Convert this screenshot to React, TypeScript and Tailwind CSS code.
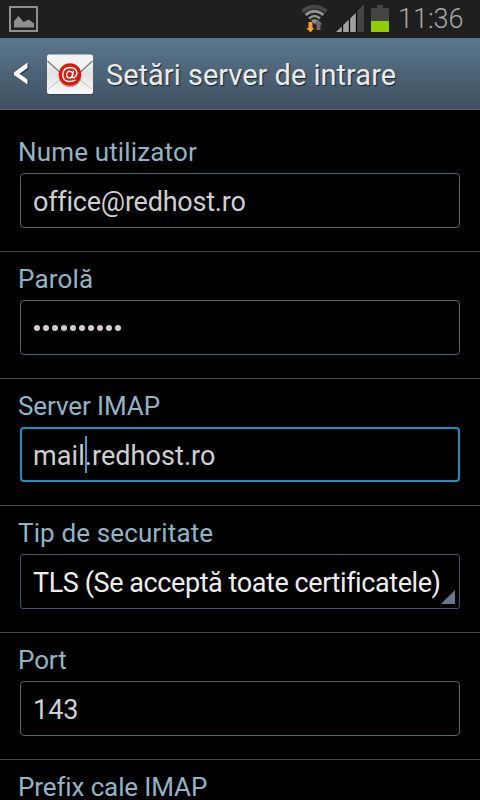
import type { ReactNode } from 'react';

function PictureIcon() {
  return (
    <svg width="29" height="26" viewBox="0 0 29 26" className="shrink-0">
      <rect x="1" y="1" width="27" height="24" fill="none" stroke="#8e8e8e" strokeWidth="2" />
      <path d="M5 21.500V15L9.500 10L14.500 16L20 13.500L25 17.500V21.500Z" fill="#8e8e8e" />
    </svg>
  );
}

function WifiIcon() {
  return (
    <svg width="28" height="30" viewBox="0 0 28 30" className="shrink-0">
      <g fill="none">
        <path d="M1.500 7.500Q13.500 -2 25.500 7.500" stroke="#484848" strokeWidth="4" />
        <path d="M4.500 11Q13.500 3.500 22.500 11" stroke="#929292" strokeWidth="2.800" />
        <path d="M8 14.500Q13.500 9.500 19 14.500" stroke="#929292" strokeWidth="2.600" />
      </g>
      <path d="M10 16.500Q13.500 14 17 16.500L13.500 20Z" fill="#929292" />
      <path d="M7.500 18h4v6h1.800L9.500 28.500L5.200 24H7.500Z" fill="#ff9d28" />
      <path d="M15.500 26v-5.500H13.500L17.500 16l4 4.500H19.500V26Z" fill="#6c6c6c" />
    </svg>
  );
}

function SignalIcon() {
  return (
    <svg width="28" height="27" viewBox="0 0 28 27" className="shrink-0">
      <path d="M0 27L28 0V27Z" fill="#a0a0a0" />
      <path d="M21 6.800L28 0V27H21Z" fill="#454545" />
      <path d="M6.500 20V27M13.500 13V27M20.500 6V27" stroke="#080808" strokeWidth="1.300" />
    </svg>
  );
}

function BatteryIcon() {
  return (
    <svg width="18" height="27" viewBox="0 0 18 27" className="shrink-0">
      <path d="M6 0H12V3H18V16H0V3H6Z" fill="#454545" />
      <rect y="16" width="18" height="11" fill="#92cf00" />
    </svg>
  );
}

function MailIcon() {
  return (
    <svg width="48" height="44" viewBox="0 0 48 44" className="mt-[2px] ml-[17px] shrink-0">
      <defs>
        <linearGradient id="paper" x2="0" y2="1">
          <stop stopColor="#fafafa" />
          <stop offset=".5" stopColor="#e2e2e2" />
          <stop offset="1" stopColor="#fafafa" />
        </linearGradient>
      </defs>
      <rect x="1" y="2.500" width="46" height="39.500" rx="2" fill="#263746" opacity=".7" />
      <rect x="1" y="1.500" width="46" height="39.500" rx="2" fill="url(#paper)" />
      <path d="M2 36L18 24M46 36L30 24" stroke="#bcbcbc" strokeWidth=".8" />
      <path d="M1.500 8L18 24H30L46.500 8V4Q46 2 44 2H4Q1.500 2 1.500 4Z" fill="#f3f3f3" />
      <path d="M1.500 8L18 23M46.500 8L30 23" stroke="#777" strokeWidth="1.200" fill="none" />
      <circle cx="24" cy="22.800" r="11.500" fill="#777" opacity=".5" />
      <circle cx="24" cy="21.500" r="11.200" fill="#dc1a0c" />
      <g fill="none" stroke="#fff" strokeWidth="1.400" strokeLinecap="round">
        <ellipse cx="23.600" cy="21.600" rx="2.900" ry="3.400" transform="rotate(15 23.600 21.600)" />
        <path d="M27.300 18.300L26.300 23.500Q26.500 25.300 28.200 24.500Q31 22.800 30.900 20Q30.300 14.500 24.300 14.500Q17 14.700 16.700 21.700Q16.900 28.500 23.500 28.500Q26.900 28.500 29 27.200" />
      </g>
    </svg>
  );
}

const frames = {
  normal: 'border border-[#55666f] rounded-[4px] pl-[12px] text-[#cfcfcf]',
  focused: 'border-2 border-[#1e8fbe] rounded-[4px] pl-[11px] text-[#cfcfcf]',
  spinner: 'border border-[#41586a] rounded-[3px] pl-[12px] text-[#eeeeee]',
};

function Label({ text, tracking }: { text: string; tracking: string }) {
  return (
    <div className="h-12 pt-[11px] pl-[18px] leading-8 text-[#92b4c4]">
      <span className={`inline-block whitespace-nowrap text-[26px] ${tracking}`}>{text}</span>
    </div>
  );
}

function Field({ label, tracking, kind = 'normal', children }: {
  label: string;
  tracking: string;
  kind?: keyof typeof frames;
  children: ReactNode;
}) {
  return (
    <section className="flex h-[127px] shrink-0 flex-col border-b border-[#474747]">
      <Label text={label} tracking={tracking} />
      <div className={`relative mx-5 flex h-[55px] items-center whitespace-nowrap text-[27px] ${frames[kind]}`}>
        {children}
      </div>
    </section>
  );
}

export default function App() {
  return (
    <main className="flex h-[800px] w-[480px] flex-col overflow-hidden bg-black font-['Roboto',sans-serif]">
      <div className="flex h-[38px] shrink-0 bg-[#1f1f1f]">
        <div className="mt-[6px] ml-[9px]"><PictureIcon /></div>
        <div className="mt-[4px] ml-[263px]"><WifiIcon /></div>
        <div className="mt-[5px] ml-[7px]"><SignalIcon /></div>
        <div className="mt-[5px] ml-[7px]"><BatteryIcon /></div>
        <span className="ml-[9px] text-[27px] leading-[39px] font-light text-[#a8a8a8]">11:36</span>
      </div>
      <header className="flex h-[72px] shrink-0 items-center border-b border-[#536878] bg-linear-to-b from-[#5b788e] to-[#3e4f60]">
        <svg width="16" height="24" viewBox="0 0 16 24" className="ml-[13px] shrink-0">
          <path d="M15.500 2V7.500L8 12.500L15.500 18V23.500L2 14V12Z" fill="#293b49" />
          <path d="M14.500 .5V6L6.500 11.700L14.500 17.500V22.500L1 13V10.500Z" fill="#fff" />
        </svg>
        <MailIcon />
        <h1 className="mt-[3px] ml-[12px] text-[29px] leading-9 whitespace-nowrap text-[#ebebeb] [text-shadow:1px_1px_1px_#17232d]">Setări server de intrare</h1>
      </header>
      <div className="flex flex-col pt-[15px]">
        <Field label="Nume utilizator" tracking="tracking-[0.15px]">
          <span className="pt-[3px] tracking-[-0.22px]">office@redhost.ro</span>
        </Field>
        <Field label="Parolă" tracking="tracking-[0.2px]">
          <span className="ml-px flex gap-[3px]" aria-label="Parolă">
            {Array.from({ length: 10 }, (_, i) => <i key={i} className="size-[6px] rounded-full bg-[#d0cccc]" />)}
          </span>
        </Field>
        <Field label="Server IMAP" tracking="tracking-[-0.1px]" kind="focused">
          <span className="pt-[3px] tracking-[0.07px]">mail.redhost.ro</span>
          <i className="absolute top-[7px] left-[63px] h-[37px] w-[2px] bg-[#419bdd]" />
        </Field>
        <Field label="Tip de securitate" tracking="tracking-[0.13px]" kind="spinner">
          <span className="pt-[3px] tracking-[-0.42px]">TLS (Se acceptă toate certificatele)</span>
          <i className="absolute right-[4px] bottom-[4px] size-[14px] bg-[#66788f] [clip-path:polygon(100%_0,100%_100%,0_100%)]" />
        </Field>
        <Field label="Port" tracking="tracking-[-0.1px]">
          <span className="pt-[3px]">143</span>
        </Field>
        <Label text="Prefix cale IMAP" tracking="tracking-[-0.12px]" />
      </div>
    </main>
  );
}
